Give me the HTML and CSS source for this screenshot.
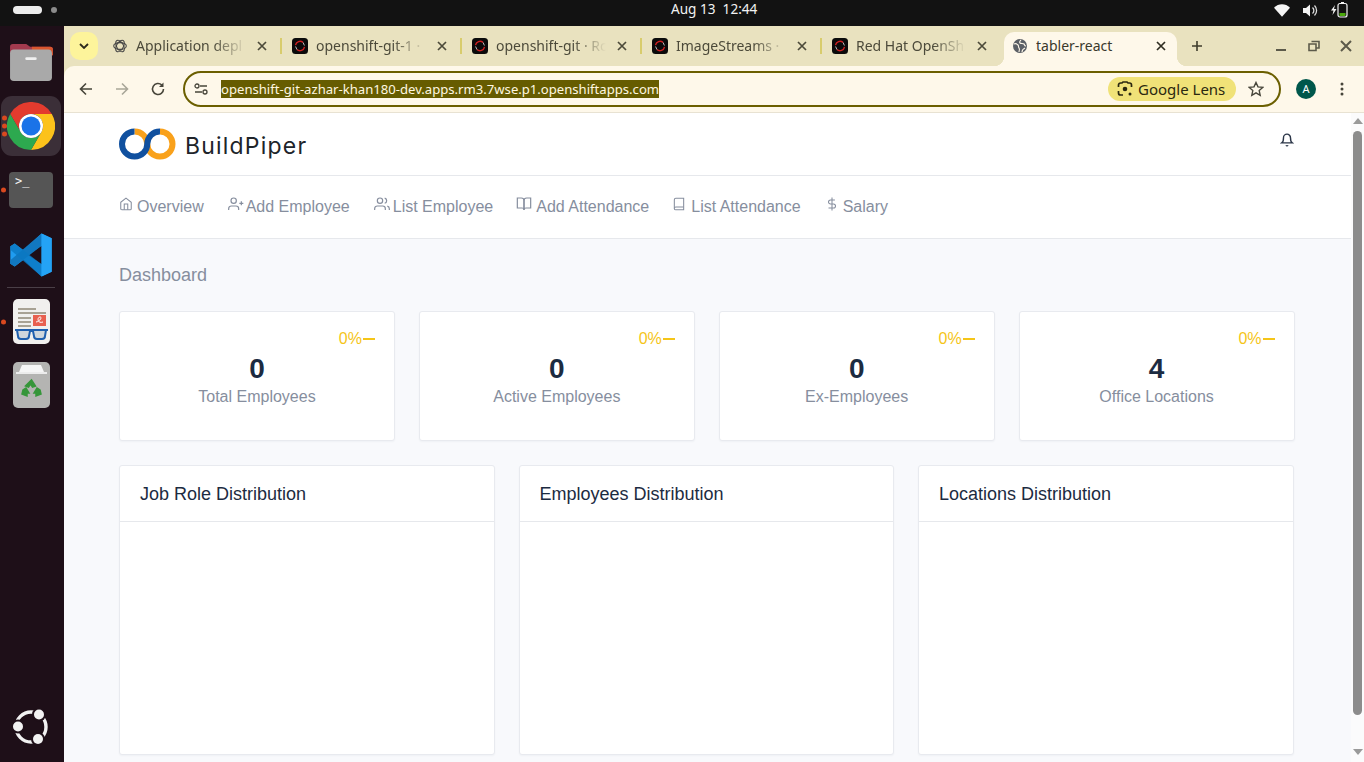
FILE: index.html
```html
<!DOCTYPE html>
<html lang="en">
<head>
<meta charset="utf-8">
<title>tabler-react</title>
<link rel="stylesheet" href="styles.css">
</head>
<body>
<svg class="defs" width="0" height="0" aria-hidden="true">
  <symbol id="os" viewBox="0 0 16 16">
    <rect width="16" height="16" rx="3.500" fill="#0b0b0b"/>
    <path d="M3.500 7.200a4.600 4.600 0 0 1 7.600-2.700" fill="none" stroke="#d02020" stroke-width="1.400"/>
    <path d="M12.500 8.800a4.600 4.600 0 0 1-7.600 2.700" fill="none" stroke="#d02020" stroke-width="1.400"/>
    <path d="M11.100 4.500l1.300 3M4.900 11.500l-1.300-3" fill="none" stroke="#bbb" stroke-width="1"/>
  </symbol>
  <symbol id="x" viewBox="0 0 12 12">
    <path d="M2 2l8 8M10 2l-8 8" fill="none" stroke="currentColor" stroke-width="1.700"/>
  </symbol>
  <symbol id="minus" viewBox="0 0 12 12">
    <path d="M0 6h12" fill="none" stroke="currentColor" stroke-width="2"/>
  </symbol>
</svg>

<div class="topbar">
  <div class="activities"><span class="pill"></span><span class="wsdot"></span></div>
  <div class="clock">Aug 13&nbsp;&nbsp;12:44</div>
  <div class="status">
    <svg width="16" height="13" viewBox="0 0 16 13"><path d="M0 3.800C4.500-.8 11.500-.8 16 3.800L8 12.800z" fill="#f4f4f4"/></svg>
    <svg width="15" height="13" viewBox="0 0 15 13"><path d="M0 4h3L7 .5v12L3 9H0z" fill="#f4f4f4"/><path d="M9.500 3.500a4 4 0 0 1 0 6M11.500 1.500a7 7 0 0 1 0 10" fill="none" stroke="#ddd" stroke-width="1.300"/></svg>
    <svg width="17" height="16" viewBox="0 0 17 16"><path d="M4 3L0 8.500h2.500L1.500 13 5.500 7H3z" fill="#f4f4f4"/><rect x="7" y="1.500" width="9" height="13.500" rx="2" fill="none" stroke="#f4f4f4" stroke-width="1.200"/><rect x="10" y="0" width="3" height="1.500" fill="#f4f4f4"/><rect x="8.500" y="11" width="6" height="3" fill="#4aa80c"/></svg>
  </div>
</div>

<div class="desk">
  <nav class="dock">
    <div class="slot slot-files">
      <svg width="44" height="40" viewBox="0 0 46 42">
        <path d="M1 12V5a3 3 0 0 1 3-3h14l4 3h21a3 3 0 0 1 3 3v6z" fill="#a33a4e"/>
        <path d="M24 5h19a3 3 0 0 1 3 3v6H24z" fill="#d9562f"/>
        <rect x="1" y="8" width="44" height="33" rx="4" fill="#a9a9a9"/>
        <rect x="17" y="16" width="12" height="3" rx="1.500" fill="#f0f0f0"/>
      </svg>
    </div>
    <div class="slot slot-chrome">
      <span class="run-dots"><i></i><i></i><i></i></span>
      <svg width="48" height="48" viewBox="0 0 48 48">
        <path d="M24 12H44.800A24 24 0 0 0 3.200 12L13.600 30A12 12 0 0 1 24 12z" fill="#e33b2e"/>
        <path d="M34.400 30L24 48A24 24 0 0 0 44.800 12H24A12 12 0 0 1 34.400 30z" fill="#fcc21b"/>
        <path d="M13.600 30L3.200 12A24 24 0 0 0 24 48L34.400 30A12 12 0 0 1 13.600 30z" fill="#2da94f"/>
        <circle cx="24" cy="24" r="12" fill="#fff"/>
        <circle cx="24" cy="24" r="9.500" fill="#1a73e8"/>
      </svg>
    </div>
    <div class="slot slot-term">
      <span class="run-dots"><i></i></span>
      <div class="term">&gt;_</div>
    </div>
    <div class="slot slot-code">
      <svg width="44" height="44" viewBox="0 0 100 100">
        <path d="M74 1L97 12V88L74 99V29L43 50L74 71V99L33 61L13 76L3 70V30L13 24L33 39z" fill="#1f9cf0"/>
        <path d="M74 1V29L13 76L3 70V62z" fill="#1178c0"/>
        <path d="M3 30L13 24L74 71V99L3 38z" fill="#0a78c2" opacity=".8"/>
        <path d="M74 1L97 12V88L74 99z" fill="#24a3f5"/>
      </svg>
    </div>
    <div class="dock-rule"></div>
    <div class="slot slot-reader">
      <span class="run-dots"><i></i></span>
      <svg width="37" height="45" viewBox="0 0 37 45">
        <rect width="37" height="45" rx="5" fill="#f1f0ee"/>
        <path d="M5 9h18v2H5zM5 13h28v2H5zM5 18h13v2H5zM5 22h13v2H5zM5 26h13v2H5z" fill="#a8a294"/>
        <rect x="20" y="16" width="13" height="11" fill="#e8604f"/>
        <path d="M23 23c3 0 7-5 4-5s-3 7 3 5" fill="none" stroke="#fff" stroke-width="1"/>
        <path d="M2 31h33M4 31l1 6a3 3 0 0 0 3 3h5a3 3 0 0 0 3-3l1-5h3l1 5a3 3 0 0 0 3 3h5a3 3 0 0 0 3-3l1-6" fill="#cfd6dc" stroke="#1f5fae" stroke-width="2"/>
      </svg>
    </div>
    <div class="slot slot-trash">
      <svg width="37" height="46" viewBox="0 0 37 46">
        <rect width="37" height="46" rx="5" fill="#b4b4b2"/>
        <path d="M6 10L9 3h19l3 7z" fill="#f6f6f6"/>
        <rect x="3" y="10" width="31" height="2" fill="#ececec"/>
        <path d="M18.500 18l4 6-3 1-2-3-2 3-3-1zM27 28l1 4-5 2v-3h-2l3-5zM10 28l-1 4 5 2v-3h2l-3-5z" fill="#36963a" stroke="#36963a" stroke-width="1.500"/>
      </svg>
    </div>
    <div class="slot slot-ubuntu">
      <svg width="36" height="36" viewBox="0 0 36 36">
        <circle cx="18" cy="18" r="15" fill="none" stroke="#f2f2f2" stroke-width="3.400"/>
        <circle cx="26" cy="5.500" r="7" fill="#1e0f18"/>
        <circle cx="5" cy="17.500" r="7" fill="#1e0f18"/>
        <circle cx="25" cy="30" r="7" fill="#1e0f18"/>
        <circle cx="26" cy="5.500" r="5" fill="#f2f2f2"/>
        <circle cx="5" cy="17.500" r="5" fill="#f2f2f2"/>
        <circle cx="25" cy="30" r="5" fill="#f2f2f2"/>
      </svg>
    </div>
  </nav>

  <div class="browser">
    <div class="tabstrip">
      <button class="tab-search" type="button">
        <svg width="10" height="6" viewBox="0 0 10 6"><path d="M1 1l4 4 4-4" fill="none" stroke="#2b2a1c" stroke-width="1.800"/></svg>
      </button>
      <div class="tab">
        <svg class="fav fav-ai" width="14" height="14" viewBox="0 0 14 14"><g fill="none" stroke="#444" stroke-width="1.100"><ellipse cx="7" cy="7" rx="6.300" ry="3.400"/><ellipse cx="7" cy="7" rx="6.300" ry="3.400" transform="rotate(60 7 7)"/><ellipse cx="7" cy="7" rx="6.300" ry="3.400" transform="rotate(120 7 7)"/></g></svg>
        <span class="tab-title">Application depl</span>
        <svg class="tab-x" width="12" height="12"><use href="#x"/></svg>
      </div>
      <div class="tab tab-sep">
        <svg class="fav" width="16" height="16"><use href="#os"/></svg>
        <span class="tab-title">openshift-git-1 ·</span>
        <svg class="tab-x" width="12" height="12"><use href="#x"/></svg>
      </div>
      <div class="tab tab-sep">
        <svg class="fav" width="16" height="16"><use href="#os"/></svg>
        <span class="tab-title">openshift-git · Rc</span>
        <svg class="tab-x" width="12" height="12"><use href="#x"/></svg>
      </div>
      <div class="tab tab-sep">
        <svg class="fav" width="16" height="16"><use href="#os"/></svg>
        <span class="tab-title">ImageStreams ·</span>
        <svg class="tab-x" width="12" height="12"><use href="#x"/></svg>
      </div>
      <div class="tab tab-sep">
        <svg class="fav" width="16" height="16"><use href="#os"/></svg>
        <span class="tab-title">Red Hat OpenSh</span>
        <svg class="tab-x" width="12" height="12"><use href="#x"/></svg>
      </div>
      <div class="tab-active">
        <svg class="fav" width="14" height="14" viewBox="0 0 14 14"><circle cx="7" cy="7" r="7" fill="#5c6066"/><path d="M1 5c2-1 3 0 4 1s0 2 1 3 0 3 0 4M8 1c-1 1-2 2-1 3s3 0 4 1 0 2 2 2M9 13c0-2 1-3 3-4" fill="none" stroke="#fef8ea" stroke-width="1.100"/></svg>
        <span class="tab-title tab-title-full">tabler-react</span>
        <svg class="tab-x tab-x-active" width="12" height="12"><use href="#x"/></svg>
      </div>
      <svg class="new-tab" width="14" height="14" viewBox="0 0 14 14"><path d="M7 2v10M2 7h10" fill="none" stroke="#3f3d2c" stroke-width="1.600"/></svg>
      <div class="win-controls">
        <svg width="14" height="14" viewBox="0 0 14 14"><path d="M2 11h10" stroke="#5c5a4a" stroke-width="2"/></svg>
        <svg width="14" height="14" viewBox="0 0 14 14"><path d="M4.500 2.500h7.500V9H9.500M2 5h7v6.500H2z" fill="none" stroke="#5c5a4a" stroke-width="1.600"/></svg>
        <svg width="14" height="14" viewBox="0 0 14 14"><path d="M2 2l10 10M12 2L2 12" stroke="#5c5a4a" stroke-width="2"/></svg>
      </div>
    </div>

    <div class="toolbar">
      <svg class="tool" width="16" height="16" viewBox="0 0 16 16"><path d="M14 8H2.500M8 2.500L2.500 8 8 13.500" fill="none" stroke="#47453a" stroke-width="1.600"/></svg>
      <svg class="tool" width="16" height="16" viewBox="0 0 16 16"><path d="M2 8h11.500M8 2.500L13.500 8 8 13.500" fill="none" stroke="#a9a698" stroke-width="1.600"/></svg>
      <svg class="tool" width="16" height="16" viewBox="0 0 16 16"><path d="M13.500 8A5.500 5.500 0 1 1 11.800 4" fill="none" stroke="#47453a" stroke-width="1.600"/><path d="M13.500 1.500V6H9z" fill="#47453a"/></svg>
      <div class="omnibox">
        <svg class="tune" width="14" height="12" viewBox="0 0 14 12"><g fill="none" stroke="#47453a" stroke-width="1.300"><circle cx="3" cy="3" r="2"/><path d="M6 3h7M1 9h7"/><circle cx="11" cy="9" r="2"/></g></svg>
        <span class="url">openshift-git-azhar-khan180-dev.apps.rm3.7wse.p1.openshiftapps.com</span>
        <span class="lens">
          <svg width="16" height="16" viewBox="0 0 16 16"><path d="M1.500 6V4A2 2 0 0 1 3.500 2H5l1-1h4l1 1h1.500a2 2 0 0 1 2 2v2M1.500 10v2a2 2 0 0 0 2 2H6" fill="none" stroke="#2a2810" stroke-width="1.700"/><circle cx="8" cy="8" r="2.300" fill="#2a2810"/><circle cx="13" cy="13" r="1.500" fill="#2a2810"/></svg>
          Google Lens
        </span>
        <svg class="star" width="16" height="16" viewBox="0 0 16 16"><path d="M8 1.500l2 4.400 4.800.5-3.600 3.200 1 4.700L8 11.900l-4.200 2.400 1-4.700L1.200 6.400 6 5.900z" fill="none" stroke="#47453a" stroke-width="1.400"/></svg>
      </div>
      <span class="avatar">A</span>
      <svg class="kebab" width="4" height="14" viewBox="0 0 4 14"><circle cx="2" cy="2" r="1.500" fill="#47453a"/><circle cx="2" cy="7" r="1.500" fill="#47453a"/><circle cx="2" cy="12" r="1.500" fill="#47453a"/></svg>
    </div>

    <div class="viewport">
      <main class="page">
        <header class="site-header">
          <svg class="logo" width="57" height="32" viewBox="0 0 57 32">
            <path d="M15.500 3.500A12.500 12.500 0 0 1 28.250 16A12.500 12.500 0 0 0 41 28.500A12.500 12.500 0 0 0 41 3.500" fill="none" stroke="#f9a11b" stroke-width="6"/>
            <path d="M41 3.500A12.500 12.500 0 0 0 28.250 16A12.500 12.500 0 0 1 15.500 28.500A12.500 12.500 0 0 1 15.500 3.500" fill="none" stroke="#10509f" stroke-width="6"/>
          </svg>
          <span class="brand">BuildPiper</span>
          <svg class="bell" width="14" height="14" viewBox="0 0 24 24"><g fill="none" stroke="#2a3547" stroke-width="2.400"><path d="M18 8A6 6 0 0 0 6 8c0 7-3 9-3 9h18s-3-2-3-9"/><path d="M13.730 21a2 2 0 0 1-3.460 0"/></g></svg>
        </header>

        <div class="nav">
          <a class="nav-item"><svg class="ic ic-home" viewBox="0 0 24 24"><path d="M3 9l9-7 9 7v11a2 2 0 0 1-2 2H5a2 2 0 0 1-2-2z"/><path d="M9 22V12h6v10"/></svg>Overview</a>
          <a class="nav-item"><svg class="ic ic-adduser" viewBox="0 0 24 24"><path d="M16 21v-2a4 4 0 0 0-4-4H5a4 4 0 0 0-4 4v2"/><circle cx="8.500" cy="7" r="4"/><path d="M20 8v6M23 11h-6"/></svg>Add Employee</a>
          <a class="nav-item"><svg class="ic ic-users" viewBox="0 0 24 24"><path d="M17 21v-2a4 4 0 0 0-4-4H5a4 4 0 0 0-4 4v2"/><circle cx="9" cy="7" r="4"/><path d="M23 21v-2a4 4 0 0 0-3-3.870M16 3.130a4 4 0 0 1 0 7.750"/></svg>List Employee</a>
          <a class="nav-item"><svg class="ic ic-open" viewBox="0 0 24 24"><path d="M2 3h6a4 4 0 0 1 4 4v14a3 3 0 0 0-3-3H2z"/><path d="M22 3h-6a4 4 0 0 0-4 4v14a3 3 0 0 1 3-3h7z"/></svg>Add Attendance</a>
          <a class="nav-item"><svg class="ic ic-book" viewBox="0 0 24 24"><path d="M4 19.500A2.500 2.500 0 0 1 6.500 17H20"/><path d="M6.500 2H20v20H6.500A2.500 2.500 0 0 1 4 19.500v-15A2.500 2.500 0 0 1 6.500 2z"/></svg>List Attendance</a>
          <a class="nav-item"><svg class="ic ic-home" viewBox="0 0 24 24"><path d="M12 1v22M17 5H9.500a3.500 3.500 0 0 0 0 7h5a3.500 3.500 0 0 1 0 7H6"/></svg>Salary</a>
        </div>

        <div class="content">
          <h1 class="page-title">Dashboard</h1>
          <div class="stats">
            <section class="card stat">
              <div class="delta">0%<svg width="12" height="12"><use href="#minus"/></svg></div>
              <div class="stat-num">0</div>
              <div class="stat-label">Total Employees</div>
            </section>
            <section class="card stat">
              <div class="delta">0%<svg width="12" height="12"><use href="#minus"/></svg></div>
              <div class="stat-num">0</div>
              <div class="stat-label">Active Employees</div>
            </section>
            <section class="card stat">
              <div class="delta">0%<svg width="12" height="12"><use href="#minus"/></svg></div>
              <div class="stat-num">0</div>
              <div class="stat-label">Ex-Employees</div>
            </section>
            <section class="card stat">
              <div class="delta">0%<svg width="12" height="12"><use href="#minus"/></svg></div>
              <div class="stat-num">4</div>
              <div class="stat-label">Office Locations</div>
            </section>
          </div>
          <div class="charts">
            <section class="card chart"><h2 class="chart-title">Job Role Distribution</h2></section>
            <section class="card chart"><h2 class="chart-title">Employees Distribution</h2></section>
            <section class="card chart"><h2 class="chart-title">Locations Distribution</h2></section>
          </div>
        </div>
      </main>
      <div class="scrollbar">
        <span class="sb-up"></span>
        <span class="sb-thumb"></span>
        <span class="sb-down"></span>
      </div>
    </div>
  </div>
</div>
</body>
</html>
```

FILE: styles.css
```css
* { box-sizing: border-box; }
html, body { margin: 0; padding: 0; }
body {
  width: 1364px;
  height: 762px;
  overflow: hidden;
  display: flex;
  flex-direction: column;
  background: #1e0f18;
  font-family: "Liberation Sans", Arial, sans-serif;
}
.defs { position: absolute; }

/* GNOME top bar */
.topbar {
  height: 26px;
  flex: none;
  background: #121212;
  display: flex;
  align-items: center;
  position: relative;
  color: #f2f2f2;
  font-family: "Noto Sans", sans-serif;
  font-size: 13.600px;
}
.activities { display: flex; align-items: center; gap: 9px; padding-left: 13px; margin-top: -6px; }
.pill { width: 29px; height: 8px; border-radius: 4px; background: #ececec; }
.wsdot { width: 6px; height: 6px; border-radius: 50%; background: #8b8b8b; }
.clock { position: absolute; left: 671px; top: 0; line-height: 18px; }
.status { margin-left: auto; display: flex; align-items: center; gap: 13px; padding-right: 16px; margin-top: -6px; }

.desk { flex: 1; display: flex; min-height: 0; }

/* Ubuntu dock */
.dock {
  width: 64px;
  flex: none;
  padding-right: 2px;
  background: #1e0f18;
  display: flex;
  flex-direction: column;
  align-items: center;
}
.slot { position: relative; display: flex; justify-content: center; align-items: center; width: 100%; }
.slot-files { margin-top: 16px; height: 40px; }
.slot-chrome {
  margin-top: 14px;
  width: 60px;
  height: 60px;
  border-radius: 11px;
  background: #3b2f38;
}
.slot-term { margin-top: 16px; height: 36px; }
.slot-code { margin-top: 25px; height: 44px; }
.slot-reader { margin-top: 11px; height: 45px; }
.slot-trash { margin-top: 18px; height: 46px; }
.slot-ubuntu { margin-top: auto; margin-bottom: 17px; height: 36px; }
.dock-rule { width: 48px; height: 1px; background: #4a3f47; margin-top: 10px; }
.run-dots {
  position: absolute;
  left: 1px;
  top: 50%;
  transform: translateY(-50%);
  display: flex;
  flex-direction: column;
  gap: 3px;
}
.run-dots i { display: block; width: 5px; height: 5px; border-radius: 50%; background: #d9491f; }
.term {
  width: 44px;
  height: 36px;
  border-radius: 4px;
  background: #555;
  color: #f4f4f4;
  font: 12px/14px "DejaVu Sans Mono", monospace;
  padding: 2px 0 0 6px;
}

/* Browser */
.browser { flex: 1; min-width: 0; display: flex; flex-direction: column; background: #e9e2bf; }
.tabstrip { height: 40px; flex: none; display: flex; align-items: center; padding-left: 6px; }
.tab-search {
  width: 28px;
  height: 28px;
  margin: 0 3px 0 0;
  padding: 0;
  border: 0;
  border-radius: 10px;
  background: #fdf49b;
  display: flex;
  align-items: center;
  justify-content: center;
}
.tab {
  width: 180px;
  height: 40px;
  flex: none;
  display: flex;
  align-items: center;
  padding-left: 11px;
  position: relative;
  color: #4c4a3a;
  font-family: "Noto Sans", sans-serif;
  font-size: 14px;
}
.tab-sep::before {
  content: "";
  position: absolute;
  left: -1px;
  top: 12px;
  width: 2px;
  height: 16px;
  background: #d8cc6c;
}
.fav { flex: none; }
.tab .fav { margin-right: 8px; }
.tab .fav-ai { margin: 0 9px 0 1px; }
.tab-title {
  width: 110px;
  flex: none;
  white-space: nowrap;
  overflow: hidden;
  padding-bottom: 2px;
  -webkit-mask-image: linear-gradient(90deg, #000 70%, transparent 100%);
  mask-image: linear-gradient(90deg, #000 70%, transparent 100%);
}
.tab-title-full { -webkit-mask-image: none; mask-image: none; }
.tab-x { flex: none; margin-left: 10px; color: #4c4a3a; }
.tab-active {
  width: 173px;
  height: 34px;
  flex: none;
  margin: 6px 0 0 3px;
  padding: 0 10px 6px 9px;
  display: flex;
  align-items: center;
  position: relative;
  background: #fef8ea;
  border-radius: 10px 10px 0 0;
  color: #3a392c;
  font-family: "Noto Sans", sans-serif;
  font-size: 14px;
}
.tab-active .fav { margin-right: 9px; }
.tab-active::before, .tab-active::after {
  content: "";
  position: absolute;
  bottom: 0;
  width: 10px;
  height: 10px;
}
.tab-active::before { left: -10px; background: radial-gradient(circle at 0 0, transparent 10px, #fef8ea 10.500px); }
.tab-active::after { right: -10px; background: radial-gradient(circle at 100% 0, transparent 10px, #fef8ea 10.500px); }
.tab-x-active { margin-left: auto; color: #2f2e22; }
.new-tab { flex: none; margin-left: 13px; }
.win-controls { margin-left: auto; padding-right: 11px; display: flex; gap: 18.500px; align-items: center; }

.toolbar {
  height: 47px;
  flex: none;
  display: flex;
  align-items: center;
  padding: 0 0 1px 14px;
  background: #fef8ea;
  border-top-left-radius: 10px;
  border-bottom: 1px solid #e8e2d2;
}
.tool { flex: none; margin-right: 20px; }
.tool:nth-child(3) { margin-right: 17px; }
.omnibox {
  width: 1098px;
  height: 36px;
  flex: none;
  display: flex;
  align-items: center;
  padding: 0 15px 0 9px;
  border: 2px solid #6b5f00;
  border-radius: 18px;
  font-family: "Noto Sans", sans-serif;
}
.tune { flex: none; margin-right: 13px; }
.url {
  background: #665c00;
  color: #fff8e0;
  font-size: 13.120px;
  line-height: 18px;
  white-space: nowrap;
}
.lens {
  margin-left: auto;
  width: 128px;
  height: 24px;
  display: flex;
  align-items: center;
  gap: 5px;
  padding-left: 9px;
  border-radius: 12px;
  background: #f0e278;
  color: #2a2810;
  font-size: 15px;
  white-space: nowrap;
}
.star { flex: none; margin-left: 12px; }
.avatar {
  width: 20px;
  height: 20px;
  flex: none;
  margin-left: 15px;
  border-radius: 50%;
  background: #00574b;
  color: #fff;
  font: 11px/20px "Noto Sans", sans-serif;
  text-align: center;
}
.kebab { flex: none; margin-left: 24px; }

/* Page */
.viewport { flex: 1; min-height: 0; display: flex; background: #f8f9fc; }
.page { flex: 1; min-width: 0; overflow: hidden; }
.site-header {
  height: 63px;
  display: flex;
  align-items: center;
  padding: 0 56px 0 55px;
  background: #fff;
  border-bottom: 1px solid #e6e8ec;
}
.logo { flex: none; margin-top: -1px; }
.brand {
  margin: 3px 0 0 9px;
  font-family: Inter, sans-serif;
  font-size: 23px;
  letter-spacing: 1.200px;
  color: #20242a;
}
.bell { margin-left: auto; margin-right: 1px; margin-top: -8px; }
.nav {
  height: 63px;
  display: flex;
  align-items: center;
  gap: 24px;
  padding: 0 56px 0 55px;
  background: #fff;
  border-bottom: 1px solid #e6e8ec;
}
.nav-item { display: flex; align-items: center; font-size: 16px; line-height: 24px; color: #868e9e; white-space: nowrap; }
.ic { flex: none; fill: none; stroke: #868e9e; stroke-width: 1.800; margin-top: -6px; }
.ic-home { width: 14px; height: 14px; margin-right: 4px; }
.ic-adduser { width: 16px; height: 16px; margin-right: 2px; }
.ic-users { width: 16px; height: 16px; margin-right: 3px; }
.ic-open { width: 16px; height: 16px; margin: -6px 4px 0 -1px; }
.ic-book { width: 14px; height: 14px; margin: -6px 5px 0 -1px; }

.content { padding: 24px 56px 0 55px; }
.page-title { margin: 0 0 24px; font-size: 18px; font-weight: 400; line-height: 24px; color: #868e9e; }
.stats { display: grid; grid-template-columns: repeat(4, 275.875px); gap: 24px; }
.charts { display: grid; grid-template-columns: repeat(3, 375.500px); gap: 24px; margin-top: 24px; }
.card {
  background: #fff;
  border: 1px solid #e8eaef;
  border-radius: 3px;
  box-shadow: 0 1px 2px rgba(20, 40, 80, .04);
}
.stat { height: 130px; padding: 16px 19px 0; text-align: center; }
.delta {
  height: 22px;
  display: flex;
  justify-content: flex-end;
  align-items: center;
  gap: 1px;
  font-size: 16px;
  color: #f5c518;
}
.stat-num { margin-top: 4px; font-size: 28px; font-weight: 700; line-height: 30px; color: #1c2b41; }
.stat-label { margin-top: 1px; font-size: 16px; line-height: 24px; color: #868e9e; }
.chart { height: 290px; }
.chart-title {
  margin: 0;
  height: 56px;
  padding: 1px 0 0 20px;
  font-size: 18px;
  font-weight: 400;
  line-height: 55px;
  color: #1c2b41;
  border-bottom: 1px solid #e6e8ec;
}

.scrollbar { width: 13px; flex: none; background: #fbfbfc; padding-top: 5px; display: flex; flex-direction: column; align-items: center; }
.sb-up { width: 0; height: 0; flex: none; border-left: 5px solid transparent; border-right: 5px solid transparent; border-bottom: 6px solid #9a9a9a; }
.sb-thumb { width: 9px; height: 584px; flex: none; margin-top: 7px; border-radius: 5px; background: #8c8c8c; }
.sb-down { width: 0; height: 0; flex: none; margin-top: auto; margin-bottom: 7px; border-left: 5px solid transparent; border-right: 5px solid transparent; border-top: 6px solid #9a9a9a; }
```
